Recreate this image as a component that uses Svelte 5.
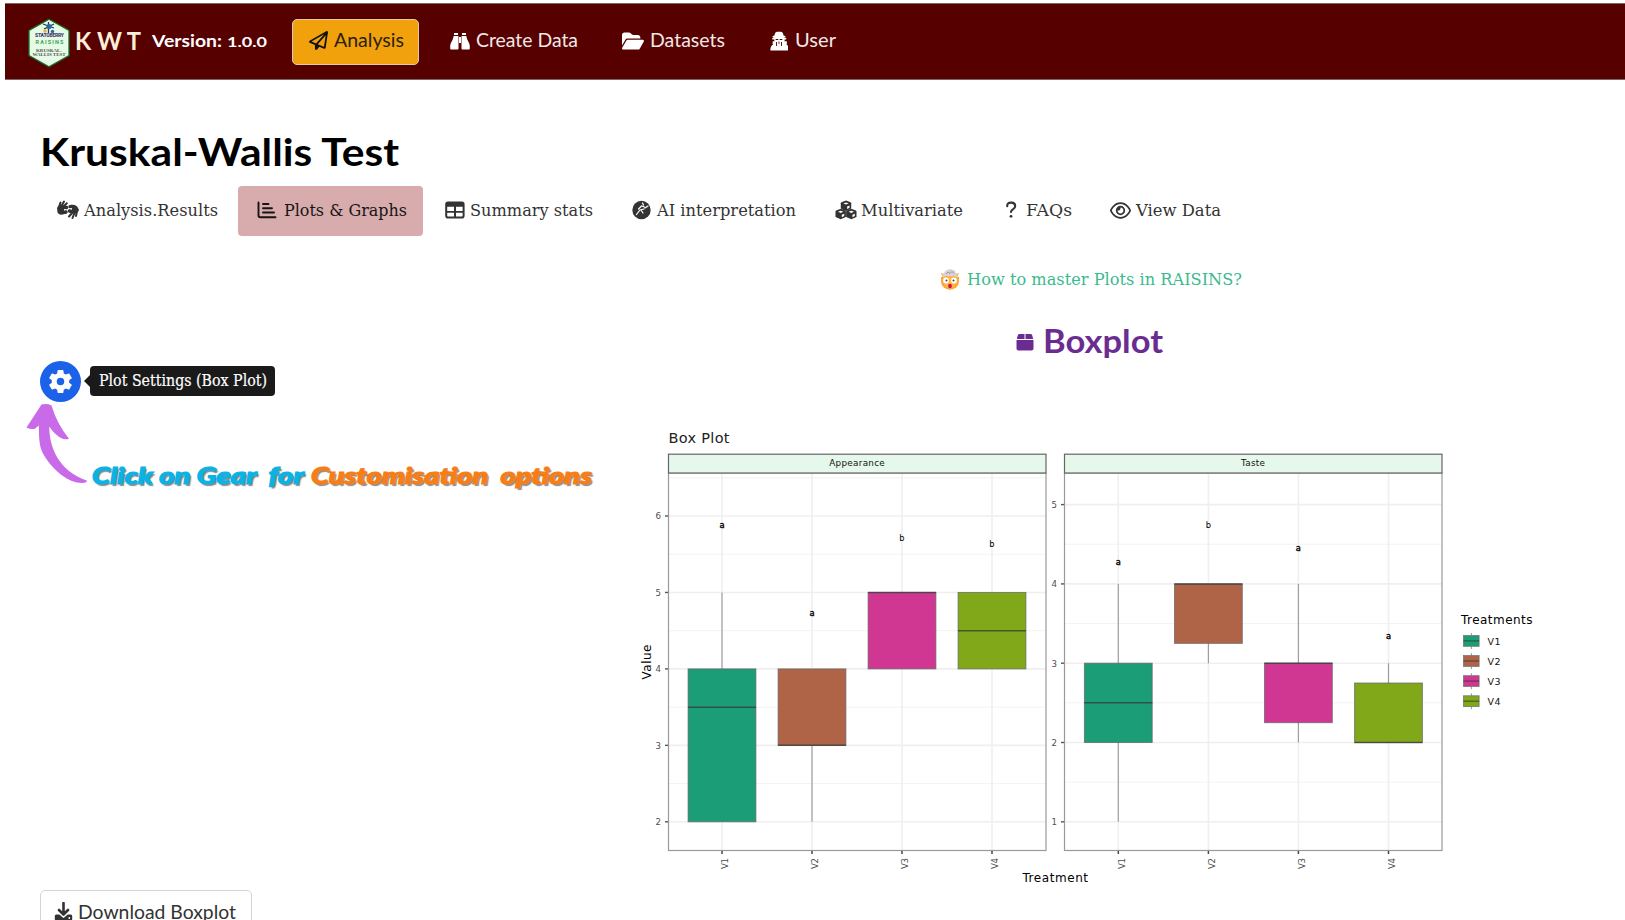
<script>
  // Scales a label sideways so that it takes exactly the given width.
  function fit(node, width) {
    const natural = node.getBoundingClientRect().width;
    node.style.transform = `scaleX(${width / natural})`;
    node.style.marginRight = width - natural + 'px';
  }

  const nav = [
    { id: 'plane', label: 'Analysis', w: 70, active: true },
    { id: 'binoculars', label: 'Create Data', w: 102 },
    { id: 'folder', label: 'Datasets', w: 75 },
    { id: 'spy', label: 'User', w: 41 }
  ];
  const tabs = [
    { id: 'hands', label: 'Analysis.Results', w: 134 },
    { id: 'bars', label: 'Plots & Graphs', w: 123, active: true },
    { id: 'table', label: 'Summary stats', w: 123 },
    { id: 'ai', label: 'AI interpretation', w: 139 },
    { id: 'cubes', label: 'Multivariate', w: 102 },
    { id: 'question', label: 'FAQs', w: 46 },
    { id: 'eye', label: 'View Data', w: 85 }
  ];

  const colors = ['#1b9e77', '#b06447', '#d03792', '#80a818'];
  const names = ['V1', 'V2', 'V3', 'V4'];
  const panels = [
    {
      title: 'Appearance', x: 668.5, xs: [722, 812, 902, 992], base: 821.8, baseValue: 2, step: 76.45,
      ticks: [2, 3, 4, 5, 6], minors: [2.5, 3.5, 4.5, 5.5, 6.5],
      boxes: [
        { q1: 2, q3: 4, med: 3.5, lo: 2, hi: 5, t: 'a', ty: 528.4 },
        { q1: 3, q3: 4, med: 3, lo: 2, hi: 4, t: 'a', ty: 616.2 },
        { q1: 4, q3: 5, med: 5, lo: 4, hi: 5, t: 'b', ty: 540.6 },
        { q1: 4, q3: 5, med: 4.5, lo: 4, hi: 5, t: 'b', ty: 546.6 }
      ]
    },
    {
      title: 'Taste', x: 1064.5, xs: [1118.3, 1208.4, 1298.4, 1388.5], base: 821.8, baseValue: 1, step: 79.3,
      ticks: [1, 2, 3, 4, 5], minors: [1.5, 2.5, 3.5, 4.5],
      boxes: [
        { q1: 2, q3: 3, med: 2.5, lo: 1, hi: 4, t: 'a', ty: 565.4 },
        { q1: 3.25, q3: 4, med: 4, lo: 3, hi: 4, t: 'b', ty: 528 },
        { q1: 2.25, q3: 3, med: 3, lo: 2, hi: 4, t: 'a', ty: 551.2 },
        { q1: 2, q3: 2.75, med: 2, lo: 2, hi: 3, t: 'a', ty: 639.4 }
      ]
    }
  ];
  const yOf = (p, v) => p.base - (v - p.baseValue) * p.step;
</script>

{#snippet icon(id)}
  {#if id === 'plane'}
    <svg width="19" height="19" viewBox="0 0 512 512" fill="currentColor"><path d="M16.1 260.2c-22.6 12.9-20.5 47.3 3.6 57.3L160 376V479.3c0 18.1 14.6 32.7 32.7 32.7c9.7 0 18.9-4.3 25.1-11.8l62-74.3 123.9 51.6c18.9 7.9 40.8-4.5 43.9-24.7l64-416c1.9-12.1-3.4-24.3-13.5-31.2s-23.3-7.5-34-1.4l-448 256zm52.1 25.5L409.7 90.6 190.1 336l1.2 1L68.2 285.7zM403.3 425.4L236.7 355.9 450.8 116.6 403.3 425.4z" /></svg>
  {:else if id === 'binoculars'}
    <svg width="20" height="20" viewBox="0 0 20 20" fill="currentColor"><path d="M4 2h4v2H4zM12 2h4v2h-4zM3.6 5H8.5v12.5a1 1 0 0 1-1 1H1.2a1 1 0 0 1-1-1v-2C.2 11.5 3.2 9.5 3.6 5zM16.4 5H11.500v12.500a1 1 0 0 0 1 1h6.300a1 1 0 0 0 1-1v-2c0-4-3-6-3.400-10.500zM9 6h2v6H9z" /></svg>
  {:else if id === 'folder'}
    <svg width="22" height="20" viewBox="0 0 576 512" fill="currentColor"><path d="M88.7 223.8L0 375.8V96C0 60.7 28.700 32 64 32H181.500c17 0 33.300 6.700 45.300 18.700l26.500 26.500c12 12 28.300 18.700 45.300 18.700H416c35.300 0 64 28.700 64 64v32H144c-22.800 0-43.800 12.100-55.300 31.800zm27.600 16.100C122.100 230 132.600 224 144 224H544c11.500 0 22 6.100 27.700 16.100s5.700 22.200-.1 32.100l-112 192C453.900 474 443.400 480 432 480H32c-11.500 0-22-6.100-27.700-16.100s-5.700-22.200 .1-32.100l112-192z" /></svg>
  {:else if id === 'spy'}
    <svg width="18" height="20" viewBox="0 0 18 20" fill="currentColor"><path d="M7 .8h4q1.500 0 2 1.600l.6 2q2 .4 2 1.100 0 .9-2.300 1.300h2.900v1.600h-1.600v1.800h2.200v1.600h.4l-.8 1.800q2.600 1.200 2.800 5.900H.3q.2-4.700 2.800-5.900l-.8-1.800h.4v-1.600h1.700V8.400H2.300V6.800h2.400Q2.400 6.400 2.400 5.500q0-.7 2-1.100l.6-2Q5.500.8 7 .8z" /><path d="M5.600 8h2.700v1.100H5.800zM9.700 8h2.700l-.2 1.100H9.700zM6.100 11h.9v4h-.9zM8.600 10.400h.8v2.600h-.8zM11 11h.9v4H11z" fill="#570000" /></svg>
  {:else if id === 'hands'}
    <svg width="24" height="20" viewBox="0 0 24 20"><g fill="none" stroke="currentColor" stroke-linecap="round" stroke-width="2"><path d="M3 7L4.500 2.500M5.500 6L8 1.500M7 7L10.800 3.200M3 8v3M21 11l-1 5M18.500 13l-2 5M17 12l-4 4.500" /><path d="M10.500 7.500Q6.500 6.500 6.300 9.800T10 12" stroke-width="3.400" /><path d="M13.500 11q4 1.200 4.200-2T14 6.600" stroke-width="3.400" /></g><path d="M1 8q2-4 6-3l1 2q-3 1-2.500 4l3 3q-5 2-7-1.500zM23 10q-2-6-8-5l-1 2q4-1 4.500 3l-2 3q5 1 6.500-3z" fill="currentColor" /></svg>
  {:else if id === 'bars'}
    <svg width="20" height="20" viewBox="0 0 20 20" fill="none" stroke="currentColor" stroke-width="1.900" stroke-linecap="round"><path d="M1.500 2.500V15.500Q1.500 17.300 3.500 17.300H18.500M6 4h5.500M6 8.200h9M6 12.500h11" /></svg>
  {:else if id === 'table'}
    <svg width="20" height="20" viewBox="0 0 20 20"><rect x="1.200" y="2.500" width="17.400" height="15" rx="1.800" fill="none" stroke="currentColor" stroke-width="2" /><path d="M1.500 3h17v3.700h-17zM1 11h18v1.700H1zM9 5h2v12H9z" fill="currentColor" /></svg>
  {:else if id === 'ai'}
    <svg width="20" height="20" viewBox="0 0 20 20"><circle cx="9.500" cy="10" r="9.200" fill="currentColor" /><path d="M4.500 14.500l3.500-4.500 4-1M6.500 9l3-3 3 1M13 8l3-2M9 10l2 3M10.500 3l1 2" fill="none" stroke="#fff" stroke-width="1.200" stroke-linecap="round" /></svg>
  {:else if id === 'cubes'}
    <svg width="22" height="20" viewBox="0 0 22 20">
      {#each [[11, 5.700], [5.700, 14], [16.300, 14]] as [cx, cy]}
        <path d="M{cx} {cy - 5.300}l4.600 1.900.6 1v4.600l-.6 1-4.600 2.100-4.600-2.100-.6-1V{cy - 2.400}l.6-1z" fill="currentColor" />
        <path d="M{cx - 2.700} {cy - 2.200}l2.700-1 2.700 1-2.700 1.100zM{cx + 1.100} {cy + .8}l2.400-1v2.300l-2.400 1.100z" fill="#fff" />
      {/each}
    </svg>
  {:else if id === 'question'}
    <svg width="14" height="20" viewBox="0 0 14 20"><path d="M3.200 6.300Q3 2.600 7 2.600h.5q3.700.2 3.700 3.400 0 2-2 3.100T7 12" fill="none" stroke="currentColor" stroke-width="2.100" stroke-linecap="round" /><circle cx="7" cy="16.300" r="1.400" fill="currentColor" /></svg>
  {:else if id === 'eye'}
    <svg width="21" height="19" viewBox="0 0 576 512" fill="currentColor"><path d="M288 80c-65.200 0-118.800 29.600-159.900 67.700C89.600 183.500 63 226 49.400 256c13.600 30 40.200 72.500 78.600 108.300C169.200 402.400 222.800 432 288 432s118.800-29.600 159.900-67.700C486.400 328.500 513 286 526.600 256c-13.600-30-40.200-72.500-78.600-108.300C406.800 109.600 353.200 80 288 80zM95.400 112.600C142.500 68.800 207.200 32 288 32s145.500 36.800 192.600 80.600c46.800 43.500 78.100 95.400 93 131.100c3.300 7.900 3.300 16.700 0 24.600c-14.900 35.700-46.200 87.700-93 131.100C433.500 443.200 368.800 480 288 480s-145.500-36.800-192.600-80.600C48.600 356 17.300 304 2.500 268.300c-3.300-7.900-3.300-16.700 0-24.600C17.300 208 48.600 156 95.400 112.600zM288 336c44.200 0 80-35.800 80-80s-35.800-80-80-80c-.7 0-1.300 0-2 0c1.300 5.100 2 10.500 2 16c0 35.300-28.700 64-64 64c-5.500 0-10.900-.7-16-2c0 .7 0 1.300 0 2c0 44.200 35.800 80 80 80zm0-208a128 128 0 1 1 0 256 128 128 0 1 1 0-256z" /></svg>
  {/if}
{/snippet}

<div class="page">
  <header>
    <svg class="logo" width="42" height="50" viewBox="0 0 42 50">
      <path d="M21 1.200L41 12.500v25L21 48.800 1 37.500v-25z" fill="#e6fbe6" stroke="#1d6b2c" stroke-width="1.300" />
      <path d="M20.500 4v11M15 6l11 4M26 6l-10 5" stroke="#26364e" stroke-width="1.300" />
      <circle cx="21" cy="8.500" r="2.600" fill="#2468ad" /><circle cx="17" cy="13" r="1.700" fill="#e9b52a" /><circle cx="24.500" cy="13.500" r="1.700" fill="#2468ad" />
      <g text-anchor="middle" font-family="Roboto, sans-serif">
        <text x="21.500" y="19" font-size="5" font-weight="900" fill="#463c75" textLength="29">STATOBERRY</text>
        <text x="21.500" y="25.700" font-size="5.500" font-weight="700" fill="#3f9f58" textLength="28">RAISINS</text>
        <g font-family="Liberation Serif, serif" font-size="5" font-weight="700" fill="#555">
          <text x="21" y="33.500" textLength="26">KRUSKAL-</text>
          <text x="21" y="37.800" textLength="33">WALLIS TEST</text>
        </g>
      </g>
    </svg>
    <span class="brand" use:fit={66}>K W T</span>
    <span class="version"><b use:fit={70}>Version:</b><b class="num" use:fit={40}>1.0.0</b></span>
    <nav>
      {#each nav as n}
        <a class={['nav-item', n.id, n.active && 'active']}>{@render icon(n.id)}<span use:fit={n.w}>{n.label}</span></a>
      {/each}
    </nav>
  </header>

  <main>
    <h1><span use:fit={359}>Kruskal-Wallis Test</span></h1>
    <div class="tabs">
      {#each tabs as t}
        <a class={['tab', t.id, t.active && 'active']}>{@render icon(t.id)}<span use:fit={t.w}>{t.label}</span></a>
      {/each}
    </div>

    <div class="content">
      <aside>
        <div class="settings">
          <button class="gear" aria-label="Settings">
            <svg width="29" height="29" viewBox="0 0 24 24"><path fill="#fff" d="M19.140 12.940c.04-.3.06-.61.06-.94 0-.32-.02-.64-.07-.94l2.030-1.580c.18-.14.23-.41.12-.61l-1.920-3.320c-.12-.22-.37-.29-.59-.22l-2.390.96c-.5-.38-1.030-.7-1.620-.94l-.36-2.540c-.04-.24-.24-.41-.48-.41h-3.840c-.24 0-.43.17-.47.41l-.36 2.540c-.59.24-1.130.57-1.620.94l-2.390-.96c-.22-.08-.47 0-.59.22L2.740 8.870c-.12.21-.08.47.12.61l2.030 1.580c-.05.3-.09.63-.09.94s.02.64.07.94l-2.030 1.580c-.18.14-.23.41-.12.61l1.920 3.320c.12.22.37.29.59.22l2.390-.96c.5.38 1.030.7 1.620.94l.36 2.540c.05.24.24.41.48.41h3.840c.24 0 .44-.17.47-.41l.36-2.540c.59-.24 1.130-.56 1.620-.94l2.390.96c.22.08.47 0 .59-.22l1.920-3.320c.12-.22.07-.47-.12-.61l-2.010-1.580z" /><circle cx="12" cy="12" r="3.100" fill="#1b62e8" /></svg>
          </button>
          <div class="tip"><span use:fit={168}>Plot Settings (Box Plot)</span></div>
        </div>
        <div class="hint">
          <svg width="64" height="84" viewBox="25 402 64 84"><path fill="#c96ae8" d="M41.500 404.500Q47 403.300 51.500 405.500Q57 424 69 438.800Q65 440.200 61 438Q54 434 49.300 426.500C49 447 59 471 86.700 480.500Q88 482.300 83 483C69 483.500 54 471 45 457C39 448 39 439 38.800 425.500L34.500 429Q30 429.500 26.500 427.500Q34 416 41.500 404.500z" /></svg>
          <p><span class="blue" use:fit={212}>Click on Gear  for</span><span class="orange" use:fit={281}>Customisation  options</span></p>
        </div>
        <button class="download">
          <svg width="19" height="20" viewBox="0 0 19 20"><path d="M9.500 1v10M5 8l4.500 4.500L14 8" fill="none" stroke="currentColor" stroke-width="2.600" stroke-linecap="round" stroke-linejoin="round" /><path d="M2.300 12.500h3l4.200 3.400 4.200-3.400h3q1.500 0 1.500 1.500v3q0 1.700-1.700 1.700h-14q-1.700 0-1.700-1.700v-3q0-1.500 1.500-1.500z" fill="currentColor" /><circle cx="15.300" cy="16" r=".9" fill="#fff" /></svg>
          <span use:fit={158}>Download Boxplot</span>
        </button>
      </aside>

      <section>
        <a class="guide">
          <svg width="20" height="22" viewBox="0 0 20 22">
            <path d="M1 9Q10 6.500 19 9v4.500A9 8.200 0 0 1 1 13.500z" fill="#f9a83a" />
            <path d="M3.500 9.500Q10 7 16.500 9.500v5Q14 20 10 20.500 6 20 3.500 14.500z" fill="#ffb74a" />
            <path d="M3 8.800Q1.500 5.500 4.500 4.500 5 1.500 8 2q2-2 4.500 0 3-.2 3 2.500 3 1 1.500 4.300Q10 6.500 3 8.800z" fill="#d9d1d9" />
            <path d="M6 6l2-2 2 1.500L12 3.500l2 2" fill="none" stroke="#a394a5" />
            <path d="M1.500 5l1.500 3M18.500 5L17 8" stroke="#efa53c" />
            <circle cx="6" cy="12.500" r="2.900" fill="#fff" /><circle cx="14" cy="12.500" r="2.900" fill="#fff" />
            <circle cx="6.500" cy="12.500" r="1" fill="#583b35" /><circle cx="13.500" cy="12.500" r="1" fill="#583b35" />
            <ellipse cx="10" cy="18" rx="1.900" ry="2.200" fill="#d1123d" />
          </svg>
          <span use:fit={275}>How to master Plots in RAISINS?</span>
        </a>
        <h2>
          <svg width="18" height="18" viewBox="0 0 18 18" fill="currentColor"><path d="M3.500 1h5v5H.8l1-3.800Q2.200 1 3.500 1zM9.500 1h5q1.300 0 1.700 1.200l1 3.800H9.500zM.5 7h17v8.500q0 2-2 2h-13q-2 0-2-2z" /></svg>
          <span use:fit={120}>Boxplot</span>
        </h2>
        <svg class="chart" width="938" height="468" viewBox="622 420 938 468" font-family="DejaVu Sans, sans-serif">
          <text x="668.500" y="443.300" font-size="14.500" textLength="61" fill="#222">Box Plot</text>
          {#each panels as p, pi}
            {#each p.minors as v}<line x1={p.x} x2={p.x + 377.500} y1={yOf(p, v)} y2={yOf(p, v)} stroke="#f3f3f3" />{/each}
            {#each p.ticks as v}
              <line x1={p.x} x2={p.x + 377.500} y1={yOf(p, v)} y2={yOf(p, v)} stroke="#efefef" stroke-width="1.600" />
              <line x1={p.x - 3.500} x2={p.x} y1={yOf(p, v)} y2={yOf(p, v)} stroke="#555" stroke-width="1.400" />
              <text x={p.x - 7.500} y={yOf(p, v) + 3.300} text-anchor="end" font-size="8.600" fill="#4d4d4d">{v}</text>
            {/each}
            {#each p.boxes as b, i}
              <line x1={p.xs[i]} x2={p.xs[i]} y1="473" y2="850.500" stroke="#efefef" stroke-width="1.600" />
              <line x1={p.xs[i]} x2={p.xs[i]} y1={yOf(p, b.lo)} y2={yOf(p, b.hi)} stroke="#999" stroke-width="1.100" />
              <rect x={p.xs[i] - 33.900} width="67.800" y={yOf(p, b.q3)} height={yOf(p, b.q1) - yOf(p, b.q3)} fill={colors[i]} stroke="#666" stroke-opacity=".75" />
              <line x1={p.xs[i] - 34} x2={p.xs[i] + 34} y1={yOf(p, b.med)} y2={yOf(p, b.med)} stroke="#333" stroke-opacity=".7" stroke-width="1.500" />
              <text x={p.xs[i]} y={b.ty} text-anchor="middle" font-size="8.300" fill="#000" stroke="#000" stroke-width={b.t === 'a' ? 0.35 : 0}>{b.t}</text>
              <line x1={p.xs[i]} x2={p.xs[i]} y1="850.500" y2="854" stroke="#444" stroke-width="1.500" />
              <text transform="translate({p.xs[i] + 6.300} 869) rotate(-90)" font-size="8.600" textLength="11" fill="#4d4d4d">{names[i]}</text>
            {/each}
            <rect x={p.x} y="473" width="377.500" height="377.500" fill="none" stroke="#999" stroke-width="1.200" />
            <rect x={p.x} y="454.200" width="377.500" height="18.800" fill="#e6f8ec" stroke="#666" stroke-width="1.200" />
            <text x={p.x + 188.500} y="466.300" text-anchor="middle" font-size="8.800" textLength={pi ? 24 : 55.500} fill="#111">{p.title}</text>
          {/each}
          <text transform="translate(651 679.500) rotate(-90)" font-size="12" textLength="35">Value</text>
          <text x="1022.500" y="881.600" font-size="12" textLength="65.500">Treatment</text>
          <text x="1461" y="623.500" font-size="12" textLength="71.500">Treatments</text>
          {#each names as n, i}
            <line x1="1471.400" x2="1471.400" y1={633 + i * 20.100} y2={649 + i * 20.100} stroke="#999" />
            <rect x="1463.500" y={635.500 + i * 20.100} width="15.600" height="10.800" fill={colors[i]} stroke="#777" stroke-width=".8" />
            <line x1="1463.500" x2="1479.100" y1={640.900 + i * 20.100} y2={640.900 + i * 20.100} stroke="#333" stroke-opacity=".7" stroke-width="1.200" />
            <text x="1487.500" y={644.500 + i * 20.100} font-size="9.500" textLength="13" fill="#111">{n}</text>
          {/each}
        </svg>
      </section>
    </div>
  </main>
</div>

<style>
  :global(body) { background: #fff; overflow: hidden; }
  .page { box-sizing: border-box; width: 1625px; height: 920px; overflow: hidden; padding-top: 3px; font-family: "DejaVu Serif", serif; color: #333; }
  span, b { display: inline-block; white-space: pre; transform-origin: 0 50%; }
  svg { display: block; flex: none; }
  header { box-sizing: border-box; height: 77px; margin-left: 5px; padding-left: 22px; display: flex; align-items: center; background: #570000; border: solid #77696a; border-width: 1px 0; color: #fff; font-family: Lato, sans-serif; }
  .logo { margin: 2px 0 0 1px; }
  .brand { margin-left: 5px; font-size: 24px; font-weight: 700; color: #fbeed8; line-height: 30px; padding-bottom: 1px; }
  .version { display: flex; align-items: baseline; margin-left: 11px; gap: 5px; font-size: 17.500px; line-height: 30px; padding-bottom: 1px; }
  .num { font-size: 14px; }
  nav { display: flex; margin-left: 25px; }
  .nav-item { box-sizing: border-box; height: 46px; display: flex; align-items: center; gap: 6px; font-size: 19.500px; line-height: 28px; color: #f0e7e7; border: 1px solid transparent; border-radius: 5px; padding: 0 14px 2px 16px; }
  .nav-item svg { color: #fff; }
  .nav-item span { padding-bottom: 1px; }
  .nav-item.active { background: #f1a10b; border-color: #dccbb5; color: #2b2110; }
  .nav-item.active svg { color: #111; }
  .nav-item.binoculars { margin-left: 14px; }
  .nav-item.folder { margin-left: 12px; }
  .nav-item.spy { margin-left: 13px; gap: 7px; }
  h1 { margin: 47px 0 0 40px; height: 49px; font: 700 38px/48px Lato, sans-serif; color: #000; }
  .tabs { display: flex; margin: 10px 0 0 38px; height: 50px; }
  .tab { display: flex; align-items: center; padding: 0 19px 2px 20px; box-sizing: border-box; gap: 6px; font-size: 17.500px; line-height: 24px; border-radius: 4px; }
  .tab.hands { gap: 4px; padding: 0 20px 2px 18px; }
  .tab.active { background: #d8abac; color: #151515; padding: 0 16px 2px 19px; margin-right: 2px; gap: 7px; }
  .tab.table { gap: 5px; }
  .tab.ai { gap: 5px; }
  .tab.cubes { gap: 4px; padding-left: 20px; }
  .tab.question { gap: 8px; padding-left: 22px; }
  .tab.eye { gap: 5px; padding-left: 19px; }
  .content { display: grid; grid-template-columns: 622px 938px; }
  aside { padding-top: 125px; }
  .settings { display: flex; align-items: center; padding-left: 39.500px; gap: 9px; }
  button { border: 0; padding: 0; }
  .gear { width: 41px; height: 41px; border-radius: 50%; background: #1b62e8; display: grid; place-items: center; }
  .tip { position: relative; top: -.5px; box-sizing: border-box; width: 185px; height: 30px; padding-left: 9px; border-radius: 4px; background: #1a1a1a; color: #fff; font-size: 16px; line-height: 29px; -webkit-text-stroke: .2px #fff; }
  .tip::before { content: ""; position: absolute; left: -6px; top: 9px; border: solid transparent; border-width: 6px 6px 6px 0; border-right-color: #1a1a1a; }
  .hint { display: flex; align-items: flex-end; margin: 0 0 0 25px; gap: 3px; }
  .hint p { display: flex; gap: 7px; margin: 0 0 -4px; font: italic 900 23.500px/30px Lato, sans-serif; text-shadow: 1.500px 1.500px 1px #888; -webkit-text-stroke: 1.200px currentColor; }
  .blue { color: #0cb2e4; }
  .orange { color: #f77e16; }
  .download { box-sizing: border-box; width: 212px; height: 46px; margin: 404px 0 0 40px; padding: 0 13px 2px; display: flex; align-items: center; gap: 5px; border: 1px solid #d5d5d5; border-radius: 5px; background: #fff; color: #333; font: 19.500px/28px Lato, sans-serif; }
  section { display: flex; flex-direction: column; align-items: center; }
  .guide { display: flex; align-items: center; gap: 7px; margin-top: 29px; font-size: 17.500px; line-height: 28px; color: #3bba90; }
  h2 { display: flex; align-items: center; gap: 9px; margin: 28px 3px 59px 0; height: 40px; font: 700 32px/40px Lato, sans-serif; color: #6b2c91; }
  h2 svg { margin-top: 2px; }
</style>
